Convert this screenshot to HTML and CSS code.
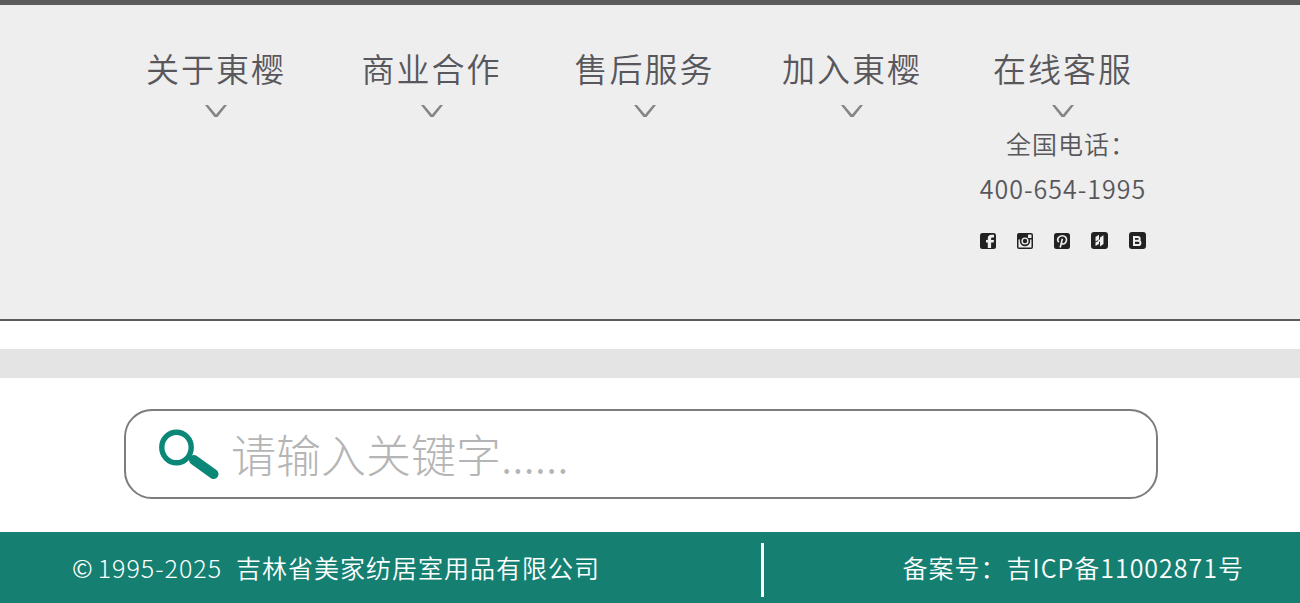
FILE: index.html
```
<!DOCTYPE html>
<html lang="zh-CN">

<head>
  <meta charset="UTF-8">
  <meta name="viewport" content="width=device-width, initial-scale=1.0">
  <title>東樱</title>
  <link rel="stylesheet" href="styles.css">
</head>

<body>
  <nav class="links">
    <div class="col">
      <button type="button" class="toggle">
        关于東樱
        <svg class="arrow" viewBox="0 0 22 12"><path d="M0 0h3l8 9.500 8-9.500h3L12.500 12h-3z" /></svg>
      </button>
    </div>
    <div class="col">
      <button type="button" class="toggle">
        商业合作
        <svg class="arrow" viewBox="0 0 22 12"><path d="M0 0h3l8 9.500 8-9.500h3L12.500 12h-3z" /></svg>
      </button>
    </div>
    <div class="col">
      <button type="button" class="toggle">
        售后服务
        <svg class="arrow" viewBox="0 0 22 12"><path d="M0 0h3l8 9.500 8-9.500h3L12.500 12h-3z" /></svg>
      </button>
    </div>
    <div class="col">
      <button type="button" class="toggle">
        加入東樱
        <svg class="arrow" viewBox="0 0 22 12"><path d="M0 0h3l8 9.500 8-9.500h3L12.500 12h-3z" /></svg>
      </button>
    </div>
    <div class="col">
      <button type="button" class="toggle">
        在线客服
        <svg class="arrow" viewBox="0 0 22 12"><path d="M0 0h3l8 9.500 8-9.500h3L12.500 12h-3z" /></svg>
      </button>
      <p class="tel-title">全国电话：</p>
      <a class="tel" href="tel:400-654-1995">400-654-1995</a>
      <div class="social">
        <a href="#" aria-label="Facebook">
          <svg viewBox="0 0 16 16">
            <rect width="16" height="16" rx="2.500" />
            <path class="w" d="M7.800 15V9.500H6V7h1.800V5.300C7.800 3 9.200 1.800 11.400 1.800H14v2.600h-1.600c-1 0-1.300.4-1.300 1.200V7H14l-.4 2.500h-2.500V15z" />
          </svg>
        </a>
        <a href="#" aria-label="Instagram">
          <svg viewBox="0 0 16 16">
            <rect width="16" height="16" rx="2" />
            <path class="w" d="M1.500 6.500H4a4.300 4.300 0 1 0 8 0h2.500v8h-13z" />
            <circle class="ring" cx="8" cy="8" r="4.400" />
            <circle cx="8" cy="8" r="2.200" />
            <rect class="w" x="11" y="1.500" width="3.500" height="3.500" rx=".5" />
          </svg>
        </a>
        <a href="#" aria-label="Pinterest">
          <svg viewBox="0 0 16 16">
            <rect width="16" height="16" rx="2.500" />
            <path class="line" d="M4.800 9.300C2.300 6.500 4.500 2.800 8.200 2.800c3 0 4.600 2 4.300 4.400-.3 2.600-2.200 4.100-4 3.700-1-.2-1.400-.9-1.400-.9M8.400 5.800 6.200 14.500" />
          </svg>
        </a>
        <a href="#" aria-label="Houzz">
          <svg class="big" viewBox="0 0 17 17">
            <rect width="17" height="17" rx="3" />
            <path class="w" d="M4.500 5l3.500-2.200v4.700L4.500 9.500zM4.500 10.500l3.500-2v3.500l-3.500 2zM9 5.500l3.500-2.200v8.700L9 14.500zM7 8.500l3.500-2v2L7 10.500z" />
          </svg>
        </a>
        <a href="#" aria-label="Blog">
          <svg class="big" viewBox="0 0 17 17">
            <rect width="17" height="17" rx="3" />
            <path class="bold" d="M5 5h3.800a1.800 1.800 0 0 1 0 3.800H5zM5 8.800h4.300a2 2 0 0 1 0 4.200H5z" />
          </svg>
        </a>
      </div>
    </div>
  </nav>

  <div class="band"></div>

  <form class="search">
    <button type="submit" class="search-btn" aria-label="搜索">
      <svg viewBox="0 0 60 52">
        <ellipse cx="17.500" cy="20.500" rx="14.700" ry="15.300" />
        <path d="M35 33 54.500 47" />
      </svg>
    </button>
    <input type="text" class="search-input" aria-label="关键字" placeholder="请输入关键字......">
  </form>

  <footer class="copyright">
    <p class="company"><span>©</span><span class="years">1995-2025</span><span>吉林省美家纺居室用品有限公司</span></p>
    <p class="record">备案号：吉ICP备11002871号</p>
  </footer>
</body>

</html>
```
FILE: styles.css
```
* {
  box-sizing: border-box;
}

body {
  margin: 0;
  background: #fff;
  color: #58575c;
  font-family: "Noto Sans CJK SC", sans-serif;
  font-weight: 350;
}

p {
  margin: 0;
}

button {
  padding: 0;
  border: none;
  background: none;
  color: inherit;
  font: inherit;
  cursor: pointer;
}

/* 导航 */
.links {
  display: grid;
  grid-template-columns: 216fr 215fr 211fr 204fr 218fr;
  padding: 41px 128px 70px 108px;
  background: #eee;
  border-top: 5px solid #5b5b5b;
  border-bottom: 2px solid #5b5b5b;
}

.col {
  display: flex;
  flex-direction: column;
  align-items: center;
}

.toggle {
  display: flex;
  flex-direction: column;
  align-items: center;
  gap: 15px;
  font-size: 33px;
  line-height: 44px;
  letter-spacing: 2px;
}

.arrow {
  width: 22px;
  height: 12px;
  fill: #858585;
}

.tel-title {
  margin-top: 8px;
  padding-left: 16px;
  font-size: 25px;
  line-height: 36px;
  letter-spacing: 1px;
}

.tel {
  margin-top: 9px;
  color: inherit;
  font-size: 25px;
  line-height: 36px;
  letter-spacing: 1px;
  text-decoration: none;
}

.social {
  display: flex;
  align-items: center;
  gap: 21px;
  margin-top: 26px;
}

.social svg {
  display: block;
  width: 16px;
  height: 16px;
  fill: #222;
}

.social .big {
  width: 17px;
  height: 17px;
}

.social .w {
  fill: #eee;
}

.social .ring,
.social .line,
.social .bold {
  fill: none;
  stroke: #eee;
  stroke-width: 1.6;
}

.social .ring {
  stroke: #222;
  fill: #eee;
}

.social .bold {
  stroke-width: 2;
}

.band {
  height: 29px;
  margin-top: 28px;
  background: #e4e4e4;
}

/* 搜索 */
.search {
  display: flex;
  align-items: center;
  gap: 12px;
  height: 90px;
  margin: 31px 142px 33px 124px;
  padding: 0 33px 2px;
  border: 2px solid #7d7d7d;
  border-radius: 28px;
}

.search-btn svg {
  display: block;
  width: 60px;
  height: 52px;
  fill: none;
  stroke: #0b8778;
  stroke-width: 5.4;
}

.search-btn path {
  stroke-width: 10;
  stroke-linecap: round;
}

.search-input {
  flex: 1;
  min-width: 0;
  padding: 0;
  border: none;
  outline: none;
  background: none;
  color: #58575c;
  font: inherit;
  font-size: 45px;
  font-weight: 300;
}

.search-input::placeholder {
  color: #b5b5b5;
}

/* 版权 */
.copyright {
  display: flex;
  align-items: flex-end;
  height: 71px;
  padding: 0 56px 6px 72px;
  background: #158072;
  color: #fff;
  font-size: 25px;
  line-height: 48px;
  letter-spacing: 1px;
}

.company,
.record {
  height: 54px;
}

.company {
  display: flex;
  flex: 690;
}

.years {
  margin: 0 14px 0 4px;
  font-weight: 300;
}

.record {
  flex: 480;
  border-left: 3px solid #fff;
  text-align: right;
}
```
